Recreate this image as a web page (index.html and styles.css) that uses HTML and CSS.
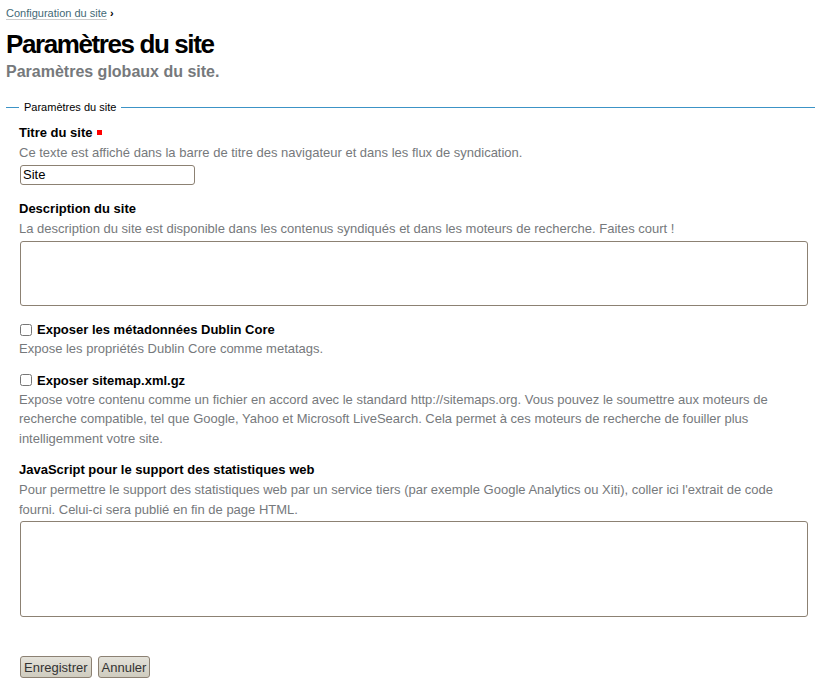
FILE: index.html
```html
<!DOCTYPE html>
<html lang="fr">
<head>
<meta charset="utf-8">
<title>Paramètres du site</title>
<link rel="stylesheet" href="styles.css">
</head>
<body>
<div class="page">
  <div class="crumbs"><a href="#" class="crumb">Configuration du site</a> <span class="sep">›</span></div>
  <h1 class="title">Paramètres du site</h1>
  <p class="subtitle">Paramètres globaux du site.</p>
  <form class="form">
    <div class="fs-head"><span class="rule rule-short"></span><span class="legend">Paramètres du site</span><span class="rule rule-long"></span></div>
    <div class="fs">
      <div class="field">
        <label class="label">Titre du site <span class="req"></span></label>
        <div class="help">Ce texte est affiché dans la barre de titre des navigateur et dans les flux de syndication.</div>
        <input class="text" type="text" value="Site">
      </div>

      <div class="field">
        <label class="label">Description du site</label>
        <div class="help">La description du site est disponible dans les contenus syndiqués et dans les moteurs de recherche. Faites court !</div>
        <textarea class="area area-desc"></textarea>
      </div>

      <div class="field field-check">
        <label class="label check"><input type="checkbox" class="cb"> Exposer les métadonnées Dublin Core</label>
        <div class="help">Expose les propriétés Dublin Core comme metatags.</div>
      </div>

      <div class="field field-check">
        <label class="label check"><input type="checkbox" class="cb"> Exposer sitemap.xml.gz</label>
        <div class="help">Expose votre contenu comme un fichier en accord avec le standard http://sitemaps.org. Vous pouvez le soumettre aux moteurs de recherche compatible, tel que Google, Yahoo et Microsoft LiveSearch. Cela permet à ces moteurs de recherche de fouiller plus intelligemment votre site.</div>
      </div>

      <div class="field">
        <label class="label">JavaScript pour le support des statistiques web</label>
        <div class="help">Pour permettre le support des statistiques web par un service tiers (par exemple Google Analytics ou Xiti), coller ici l'extrait de code fourni. Celui-ci sera publié en fin de page HTML.</div>
        <textarea class="area area-js"></textarea>
      </div>

      <div class="actions">
        <button type="button" class="btn">Enregistrer</button>
        <button type="button" class="btn">Annuler</button>
      </div>
    </div>
  </form>
</div>
</body>
</html>
```

FILE: styles.css
```css
html, body {
  margin: 0;
  padding: 0;
  background: #fff;
}
body {
  font-family: "Liberation Sans", Arial, sans-serif;
  color: #000;
}
.page {
  padding: 4px 10px 0 6px;
}
.crumbs {
  font-size: 11px;
  line-height: 18px;
  color: #000;
}
.crumb {
  color: #436976;
  text-decoration: none;
  border-bottom: 1px solid #ccc;
}
.sep {
  font-weight: bold;
}
.title {
  font-size: 26px;
  font-weight: bold;
  letter-spacing: -1.4px;
  margin: 5px 0 0 0;
  line-height: 34px;
}
.subtitle {
  font-size: 16px;
  font-weight: bold;
  color: #76797c;
  margin: 0;
  line-height: 22px;
}
.form {
  margin-top: 18px;
}
.fs-head {
  display: flex;
  align-items: center;
  height: 13px;
}
.rule {
  height: 1px;
  background: #3c93c6;
}
.rule-short {
  width: 13px;
}
.rule-long {
  flex: 1;
}
.legend {
  font-size: 11px;
  line-height: 13px;
  padding: 0 5px;
  color: #000;
}
.fs {
  padding: 9px 0 0 13px;
}
.field {
  margin-bottom: 14px;
}
.field-check {
  margin-bottom: 12px;
}
.label {
  display: block;
  font-size: 13px;
  font-weight: bold;
  line-height: 20px;
}
.req {
  display: inline-block;
  width: 5px;
  height: 5px;
  background: #f00;
  vertical-align: 2px;
  margin-left: 1px;
}
.check {
  display: flex;
  align-items: center;
  gap: 4px;
  line-height: 19px;
  height: 19px;
}
.cb {
  margin: 0 1px 0 1px;
  width: 12px;
  height: 12px;
}
.help {
  font-size: 13px;
  color: #76797c;
  line-height: 19.5px;
  padding-right: 10px;
}
.text {
  box-sizing: border-box;
  width: 175px;
  height: 20px;
  border: 1px solid #8c8173;
  border-radius: 3px;
  font-family: "Liberation Sans", Arial, sans-serif;
  font-size: 13px;
  padding: 0 2px;
  margin: 2px 0 0 1px;
  display: block;
}
.area {
  box-sizing: border-box;
  display: block;
  width: 788px;
  border: 1px solid #8c8173;
  border-radius: 3px;
  margin: 3px 0 0 1px;
  resize: none;
}
.area-desc { height: 65px; }
.area-js { height: 96px; margin-top: 2px; }
.actions {
  display: flex;
  gap: 6px;
  padding: 25px 0 0 1px;
}
.btn {
  box-sizing: border-box;
  font-family: "Liberation Sans", Arial, sans-serif;
  font-size: 13px;
  color: #333;
  height: 22px;
  padding: 0 3px;
  border: 1px solid #8c8173;
  border-radius: 3px;
  background: linear-gradient(#e4e2da, #cfccbf);
}
```
